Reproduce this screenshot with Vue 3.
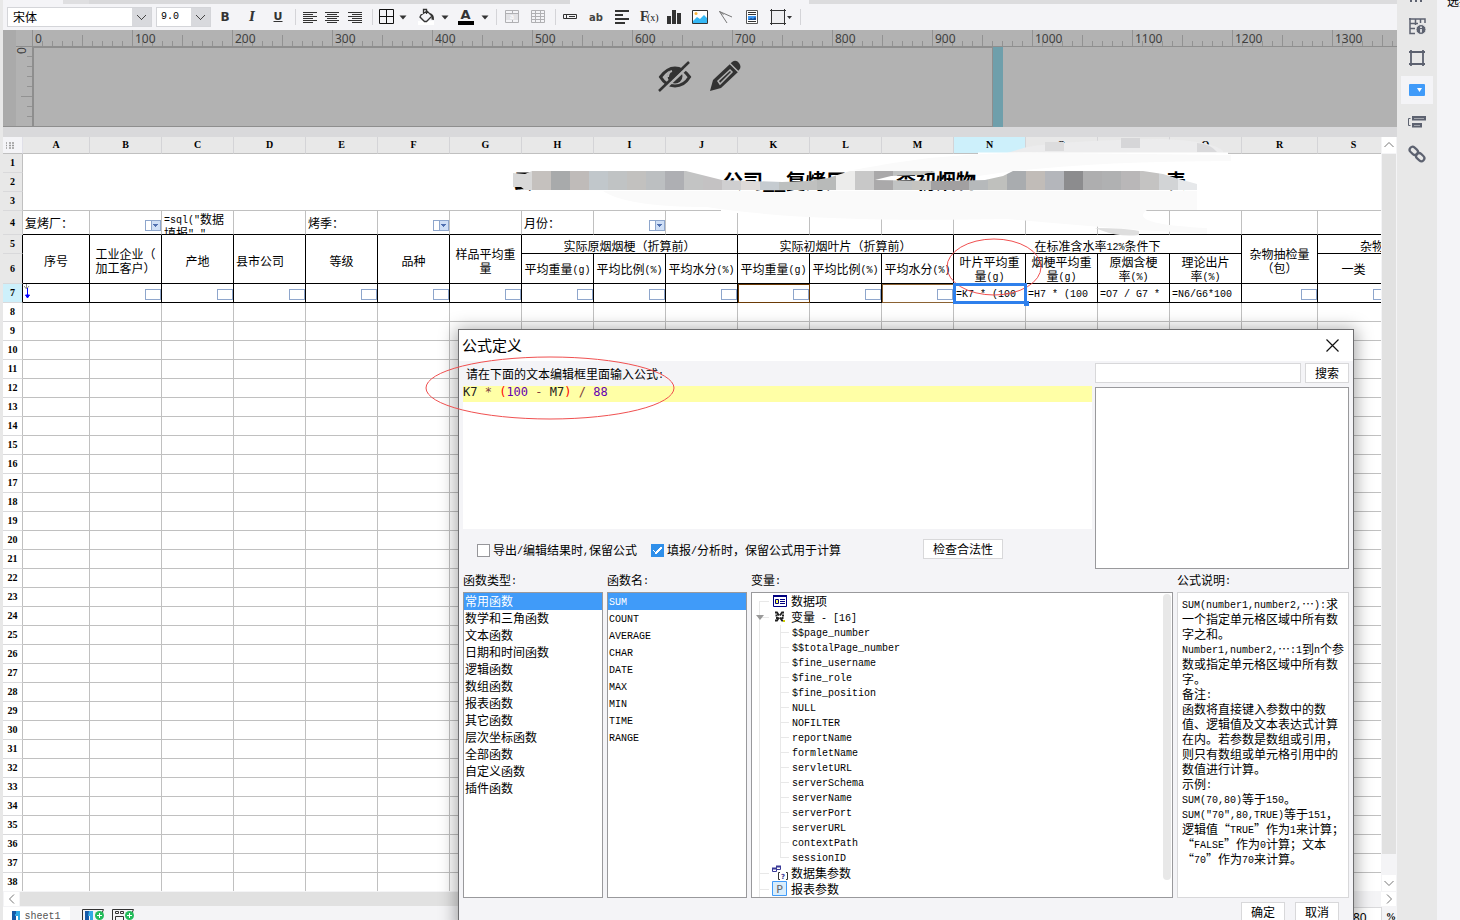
<script setup>
import { h, ref } from 'vue'

// Splits mixed text so that Latin runs take the half-width face.
const Mix = (props) =>
  h(
    'span',
    { class: 'mix' },
    props.t.split(/([\x20-\x7e]+)/).filter(Boolean).map((run) =>
      /^[\x20-\x7e]+$/.test(run) ? h('span', { class: 'lat' }, run) : run
    )
  )
Mix.props = ['t']

const K = '#333'
const bars = (rows) => rows.map(([x, y, w]) => `<path d="M${x} ${y}h${w}" stroke="${K}"/>`).join('')
const caret = '<path d="M8.500 9.500h7l-3.500 4z" fill="#333"/>'

const tools = [
  { n: '加粗', w: 28, s: `<text x="12" y="15" text-anchor="middle" font-family="DejaVu Sans" font-weight="bold" font-size="12" fill="${K}">B</text>` },
  { n: '倾斜', w: 26, s: `<text x="12" y="15" text-anchor="middle" font-family="DejaVu Serif" font-weight="bold" font-style="italic" font-size="12" fill="${K}">I</text>` },
  { n: '下划线', w: 26, s: `<text x="12" y="14" text-anchor="middle" font-family="DejaVu Sans" font-weight="bold" font-size="11" fill="${K}">U</text><path d="M7.500 15.500h9" stroke="${K}"/>` },
  { sep: 1, w: 8 },
  { n: '左对齐', w: 22, s: bars([[5, 6.5, 14], [5, 8.5, 10], [5, 10.5, 14], [5, 12.5, 10], [5, 14.5, 14], [5, 16.5, 10]]) },
  { n: '居中', w: 22, s: bars([[5, 6.5, 14], [7, 8.5, 10], [5, 10.5, 14], [7, 12.5, 10], [5, 14.5, 14], [7, 16.5, 10]]) },
  { n: '右对齐', w: 24, s: bars([[5, 6.5, 14], [9, 8.5, 10], [5, 10.5, 14], [9, 12.5, 10], [5, 14.5, 14], [9, 16.5, 10]]) },
  { sep: 1, w: 10 },
  { n: '边框', w: 18, s: '<path d="M5.500 3.500h14v14h-14zM12.500 3.500v14M5.500 10.500h14" fill="none" stroke="#111"/>' },
  { n: '边框选项', w: 16, s: caret },
  { n: '填充', w: 30, s: '<rect x="4" y="15" width="16" height="4" fill="#fff"/><path d="M7 9l6-4 5 5-5.500 5.500h-2L6 11zM9.500 8V3.500h3V8" fill="none" stroke="#333" stroke-width="1.300"/><path d="M15.500 7q5 1 4.500 7l-2.500-.5V10z" fill="#333"/>' },
  { n: '填充选项', w: 8, s: caret },
  { n: '字体颜色', w: 32, s: `<text x="12.500" y="13" text-anchor="middle" font-family="DejaVu Sans" font-weight="bold" font-size="13" fill="${K}">A</text><rect x="5" y="15" width="16" height="4"/>` },
  { n: '字体颜色选项', w: 8, s: caret },
  { sep: 1, w: 14 },
  { n: '合并单元格', w: 18, s: '<path d="M5.500 4.500h13v12h-13zM5 7.500h14M12.500 4v3M12.500 14v3" fill="none" stroke="#b0b0b3"/><rect x="6" y="8" width="12" height="6" fill="#e2e2e5"/><text x="12" y="13" text-anchor="middle" font-family="DejaVu Sans" font-size="7" fill="#fff">a</text>' },
  { n: '取消合并', w: 32, s: '<path d="M6.500 4.500h13v12h-13zM6 7.500h14M6 10.500h14M6 13.500h14M10.500 4v13M15.500 4v13" fill="none" stroke="#b0b0b3"/>' },
  { sep: 1, w: 4 },
  { n: '控件', w: 26, s: '<path d="M5.500 8.500h13v4h-13z" fill="none" stroke="#333"/><path d="M8.500 8v5M11 10.500h6" stroke="#333"/>' },
  { n: '文本', w: 26, s: `<text x="12" y="15" text-anchor="middle" font-family="DejaVu Sans" font-weight="bold" font-size="10" fill="#444">ab</text>` },
  { n: '富文本', w: 26, s: '<path d="M5 5h14M5 9h8M5 13h14M5 17h10" stroke="#333" stroke-width="2"/>' },
  { n: '公式', w: 26, s: '<text x="4" y="15" font-family="Liberation Serif" font-weight="bold" font-size="14" fill="#333">F</text><text x="11" y="15" font-family="Liberation Serif" font-size="10" fill="#111">(x)</text>' },
  { n: '图表', w: 26, s: '<path d="M5 10h4v8H5zM10 4h4v14h-4zM15 7h4v11h-4z" fill="#333"/>' },
  { n: '图片', w: 26, s: '<path d="M4.500 4.500h15v13h-15z" fill="#fff" stroke="#333"/><circle cx="8" cy="7.500" r="1.500" fill="#fcb53c"/><path d="M5 15l4-4 3 2 4-4 3 3v5H5z" fill="#35b8f5"/>' },
  { n: '斜线', w: 26, s: '<path d="M5.500 5.500L18 11M5.500 5.500L13 17M5.500 5.500l4 3" fill="none" stroke="#777"/>' },
  { n: '子报表', w: 26, s: '<path d="M6.500 4.500h11v13h-11z" fill="#fff" stroke="#555"/><path d="M8 6.500h8M8 8.500h8M8 15.500h8" stroke="#333"/><rect x="8" y="10" width="8" height="4" fill="#3c97f3"/><path d="M8 14l3-2 2 1 2-2 1 1v2z" fill="#174f94"/>' },
  { n: '悬浮元素', w: 32, s: '<path d="M2.500 4.500h13v13h-13z" fill="#efeff1" stroke="#333"/><path d="M1 4.500h16M1 17.500h16M2.500 3v16M15.500 3v16" stroke="#333"/><path d="M18 10h5l-2.500 3z" fill="#333"/>' },
  { sep: 1, w: 6 }
]

const sideTools = [
  { n: '单元格属性', s: '<path d="M4 5h16v4M5 4v15.500h5M5 9.500h8M5 14.500h5M10.500 5v6M15.500 5v4" fill="none" stroke="#5d6270" stroke-width="1.500"/><circle cx="16" cy="15.500" r="5" fill="#5d6270" stroke="#e8e8e8"/><path d="M16 12.500v1.500M16 15v3.500" stroke="#fff" stroke-width="1.500"/>' },
  { n: '单元格元素', s: '<path d="M6 6h12v12H6zM4 6h16M4 18h16M6 4v16M18 4v16" fill="none" stroke="#5d6270" stroke-width="1.800"/>' },
  { n: '控件设置', on: true, s: '<rect x="4" y="6" width="16" height="12" rx="1" fill="#409bf9"/><path d="M12 10h5l-2.500 4z" fill="#fff"/>' },
  { n: '条件属性', s: '<path d="M8 7h12v2.500H8zM8 14h8v2.500H8z" fill="none" stroke="#5d6270" stroke-width="2"/><path d="M5.500 8.500h-2v7h2" fill="none" stroke="#5d6270"/>' },
  { n: '超级链接', s: '<g fill="none" stroke="#5d6270" stroke-width="2.200"><rect x="-5.500" y="-3" width="9" height="6" rx="3" transform="translate(9.500 9.500) rotate(42)"/><rect x="-3.500" y="-3" width="9" height="6" rx="3" transform="translate(14.500 14.500) rotate(42)"/></g>' }
]

const letters = 'ABCDEFGHIJKLMNOPQRS'.split('')
const rest = Array.from({ length: 31 }, (_, i) => i + 8)
const labels = Array.from({ length: 14 }, (_, i) => i * 100)
const ticks = Array.from({ length: 137 }, (_, i) => i * 10)
const row4 = ['复烤厂：', '@', '=', '', '烤季：', '@', '', '月份：', '@', '', '', '', '', '', '', '', '', '', '']
// Row 7 cells by column; every other column holds an input widget.
const row7 = { A: 'A', K: '#k', M: '#m', N: '=K7 * (100', O: '=H7 * (100', P: '=O7 / G7 *', Q: '=N6/G6*100' }
const cell7 = (l) => row7[l] || '#'

const mosaic = ['d8d8d8', 'c5c1be', 'a8aaab', 'bfbbb9', 'c1c7cb', 'c0c3c4', 'c2c1bf', 'bcbfc1', 'aeafb3', 'c3c4c4', 'c4c2c3', 'cfcfd0', 'dedad8', 'c5cbd0', 'bdc0bf', 'bfc0bf', 'b8bab9', 'ececeb', 'c8c8c8', 'aaa9aa', 'c1c3c3', 'c5c4c0', 'a2a1a2', 'a2a0a1', 'b6b9bb', 'bfc0bd', 'a9acaf', 'c1bcb8', 'b4b6bb', '8c8c8e', 'aeaeaf', 'b0b1b2', 'b9b7b8', 'c4c3c2', 'd2d4d6', 'e6e8ea']

const types = ['常用函数', '数学和三角函数', '文本函数', '日期和时间函数', '逻辑函数', '数组函数', '报表函数', '其它函数', '层次坐标函数', '全部函数', '自定义函数', '插件函数']
const names = ['SUM', 'COUNT', 'AVERAGE', 'CHAR', 'DATE', 'MAX', 'MIN', 'TIME', 'RANGE']
const vars = ['$$page_number', '$$totalPage_number', '$fine_username', '$fine_role', '$fine_position', 'NULL', 'NOFILTER', 'reportName', 'formletName', 'servletURL', 'serverSchema', 'serverName', 'serverPort', 'serverURL', 'contextPath', 'sessionID']
const help = ['SUM(number1,number2,⋯):求', '一个指定单元格区域中所有数', '字之和。', 'Number1,number2,⋯:1到n个参', '数或指定单元格区域中所有数', '字。', '备注:', '函数将直接键入参数中的数', '值、逻辑值及文本表达式计算', '在内。若参数是数组或引用，', '则只有数组或单元格引用中的', '数值进行计算。', '示例:', 'SUM(70,80)等于150。', 'SUM("70",80,TRUE)等于151，', '逻辑值“TRUE”作为1来计算；', '“FALSE”作为0计算；文本', '“70”作为70来计算。']

const typeSel = ref(0)
const nameSel = ref(0)
const keepExport = ref(false)
const keepCalc = ref(true)
</script>

<template>
  <div class="app" lang="zh-CN">
    <main class="main">
      <div class="tabstrip"><i class="t1"></i><i class="t2"></i><i class="t3"></i><i class="t4"></i><i class="t5"></i></div>
      <div class="toolbar">
        <select class="combo font" aria-label="字体"><option>宋体</option></select>
        <select class="combo size" aria-label="字号"><option>9.0</option></select>
        <template v-for="(t, i) in tools" :key="i">
          <span v-if="t.sep" class="sep" :style="{ width: t.w + 'px' }"></span>
          <button v-else class="tb" :style="{ width: t.w + 'px' }" :aria-label="t.n"><svg width="24" height="22" viewBox="0 0 24 22" v-html="t.s"></svg></button>
        </template>
      </div>

      <div class="ruler">
        <svg width="100%" height="97">
          <rect width="13" height="97" fill="#aaaaaa" />
          <path d="M13 16.500H1394M29.500 0V97M30 17.500H989.500M30.500 16V96M989.500 17V96M0 96.500H990" stroke="#8e8e8e" fill="none" />
          <rect x="990" y="17" width="10" height="80" fill="#6f9fab" />
          <path v-for="x in ticks" :key="x" :d="`M${x + 29.5} ${x % 100 === 0 ? 0 : x % 50 === 0 ? 5 : 11}V16`" stroke="#929292" />
          <path v-for="y in [10, 20, 30, 40, 50, 60, 70]" :key="'v' + y" :d="`M${y === 50 ? 18 : 24} ${y + 16.5}H29`" stroke="#929292" />
          <text v-for="x in labels" :key="'l' + x" :x="x + 32" y="13" class="rl">{{ x }}</text>
          <text class="rl" transform="translate(23 17) rotate(-90)" text-anchor="end">0</text>
          <g transform="translate(656 31)" fill="none" stroke="#333">
            <path d="M1.500 16Q8 7 16 7t14.500 9Q25 25 16 25T1.500 16z" stroke-width="3" />
            <circle cx="16" cy="15" r="7.500" fill="#333" stroke="none" />
            <path d="M9 16q0-5 4-6" stroke="#b2b2b2" stroke-width="2" />
            <path d="M2 31L33 2" stroke="#b2b2b2" stroke-width="3" />
            <path d="M0 30L30 1" stroke-width="2.500" />
          </g>
          <g transform="translate(707 31)">
            <path d="M0 30l3-11L20 3l8 8L11 27z" fill="#333" />
            <path d="M22 1q4-3 7 1t0 7l-1 1-8-7z" fill="#333" />
            <path d="M20 2.500l8 8" stroke="#b2b2b2" stroke-width="1.500" />
            <path d="M8 20L20 9l2 2L10 23z" fill="none" stroke="#b2b2b2" stroke-width="1.500" />
          </g>
        </svg>
      </div>

      <div class="sheetwrap">
        <div class="sheet">
          <table>
            <colgroup><col class="ch" /><col class="ca" /><col v-for="n in 16" :key="n" class="cn" /><col class="cr" /><col class="cn" /></colgroup>
            <thead>
              <tr class="head">
                <th class="corner"><svg width="9" height="7" viewBox="0 0 9 7"><path d="M0 1h1M0 3.500h1M0 6h1M3 1h2M6 1h2M3 3.500h2M6 3.500h2M3 6h2M6 6h2" stroke="#999" stroke-width="1.500" /></svg></th>
                <th v-for="l in letters" :key="l" :class="{ cur: l === 'N' }">{{ l }}</th>
              </tr>
            </thead>
            <tbody>
              <tr class="r19"><th class="g">1</th><td colspan="19" rowspan="3"></td></tr>
              <tr class="r19"><th class="g">2</th></tr>
              <tr class="r19"><th class="g">3</th></tr>
              <tr class="r24 above">
                <th class="g">4</th>
                <td v-for="(c, i) in row4" :key="i" :class="{ wd: c === '@' }">
                  <select v-if="c === '@'" class="cellselect" aria-label="筛选"></select>
                  <div v-else-if="c === '='" class="clip"><Mix t='=sql("数据' /><br /><Mix t='填报","' /></div>
                  <Mix v-else :t="c" />
                </td>
              </tr>
              <tr class="r19 blk five">
                <th class="g">5</th>
                <td rowspan="2" class="c">序号</td>
                <td rowspan="2" class="c">工业企业（<br />加工客户）</td>
                <td rowspan="2" class="c">产地</td>
                <td rowspan="2">县市公司</td>
                <td rowspan="2" class="c">等级</td>
                <td rowspan="2" class="c">品种</td>
                <td rowspan="2" class="c">样品平均重<br />量</td>
                <td colspan="3" class="c">实际原烟烟梗（折算前）</td>
                <td colspan="3" class="c">实际初烟叶片（折算前）</td>
                <td colspan="4" class="c"><Mix t="在标准含水率12%条件下" /></td>
                <td rowspan="2" class="c">杂物抽检量<br />（包）</td>
                <td class="far">杂物</td>
              </tr>
              <tr class="r30 blk six">
                <th class="g">6</th>
                <template v-for="k in 2" :key="k">
                  <td class="c"><Mix t="平均重量(g)" /></td>
                  <td class="c"><Mix t="平均比例(%)" /></td>
                  <td class="c"><Mix t="平均水分(%)" /></td>
                </template>
                <td class="c">叶片平均重<br /><Mix t="量(g)" /></td>
                <td class="c">烟梗平均重<br /><Mix t="量(g)" /></td>
                <td class="c">原烟含梗<br /><Mix t="率(%)" /></td>
                <td class="c">理论出片<br /><Mix t="率(%)" /></td>
                <td class="c">一类</td>
              </tr>
              <tr class="r19 blk">
                <th class="cur">7</th>
                <td v-for="l in letters" :key="l" :class="{ wd: cell7(l)[0] === '#', refk: l === 'K', refm: l === 'M', sel: l === 'N', mark: l === 'A' }">
                  <input v-if="cell7(l)[0] === '#'" class="cellinput" :aria-label="l + '7'" />
                  <svg v-else-if="l === 'A'" width="8" height="16" viewBox="0 0 8 16"><path d="M2.500 0v4M0 2l2.500 3L5 2" fill="none" stroke="#888" /><path d="M3.500 4v9M1.500 11l2 3 2-3z" stroke="#00f" fill="#00f" /></svg>
                  <Mix v-else :t="cell7(l)" />
                </td>
              </tr>
              <tr v-for="r in rest" :key="r" class="r19"><th>{{ r }}</th><td v-for="l in letters" :key="l"></td></tr>
            </tbody>
          </table>
          <svg class="smudge" width="1378" height="110">
            <path d="M1024 10Q1070 3 1160 2q50 2 60 12v6H990z" fill="#ececed" />
            <rect x="1042" y="5" width="19" height="9" fill="#dcdcdd" /><rect x="1118" y="1" width="19" height="10" fill="#d6d6d8" />
            <path d="M1194 6q14 1 20 9h-20z" fill="#d9d9db" />
            <path d="M975 15.500h250v8H975zM718 72h380v4H718z" fill="#fff" />
            <path d="M600 54h594v19h-50q-20 14 60 18v6q-80-4-200-15-200 4-300-12-80 0-104-16zM850 33q100-20 200-17l178 2v6q-180 0-280 20z" fill="#fafafa" />
            <g class="title">
              <text x="510" y="52">云</text><text x="720" y="52">公司__复烤厂</text><text x="893" y="52">查初烟物</text><text x="1163" y="52">表</text>
            </g>
            <clipPath id="brush"><path d="M510 36L522 37 529 34H683L699 38 719 43 749 44 779 45 805 44 825 41 847 34H932L918 38 888 39 872 43 942 44 982 43 1000 39 1010 34H1140L1160 37 1176 42 1194 47V53H522L518 50H510z" /></clipPath>
            <g clip-path="url(#brush)"><rect v-for="(c, i) in mosaic" :key="i" :x="510 + i * 19" y="34" width="19" height="19" :fill="'#' + c" /></g>
            <path d="M1092 91q30 0 44 3v4q-20 2-36-4z" fill="#dedede" />
          </svg>
        </div>
        <div class="vbar">
          <button aria-label="向上滚动"><svg width="12" height="8" viewBox="0 0 12 8"><path d="M1.500 6L6 1.500 10.500 6" fill="none" stroke="#777" /></svg></button>
          <div class="vthumb"></div><div class="vspace"></div>
          <button aria-label="向下滚动"><svg width="12" height="8" viewBox="0 0 12 8"><path d="M1.500 2L6 6.500 10.500 2" fill="none" stroke="#777" /></svg></button>
        </div>
      </div>

      <div class="hbar">
        <button aria-label="向左滚动"><svg width="8" height="12" viewBox="0 0 8 12"><path d="M6 1.500L1.500 6 6 10.500" fill="none" stroke="#777" /></svg></button>
        <div class="hthumb"></div><div class="hspace"></div>
        <button aria-label="向右滚动"><svg width="8" height="12" viewBox="0 0 8 12"><path d="M2 1.500L6.500 6 2 10.500" fill="none" stroke="#777" /></svg></button>
      </div>

      <div class="sheets">
        <button class="stab"><svg width="8" height="12" viewBox="0 0 8 12"><path d="M0 1h4v11H0z" fill="#1459a8" /><path d="M4 1h4v11H6V6H3V4h1z" fill="#32a9e4" /></svg><span>sheet1</span></button>
        <button class="add" aria-label="新增报表"><svg width="22" height="16" viewBox="0 0 22 16"><path d="M.5 15V.5h21L20 4" fill="none" stroke="#333" /><path d="M3 2h4v12H3z" fill="#1459a8" /><path d="M7 2h4v12H8V7H6z" fill="#32a9e4" /><circle cx="17.500" cy="6.500" r="4.500" fill="#23bb5a" /><path d="M15 6.500h5M17.500 4v5" stroke="#fff" /></svg></button>
        <button class="add" aria-label="新增聚合报表"><svg width="22" height="16" viewBox="0 0 22 16"><path d="M.5 15V.5h21L20 4M3.500 2.500h3v2h-3zM8.500 2.500h3v2h-3zM3.500 7.500h8v5h-8z" fill="none" stroke="#333" /><circle cx="17.500" cy="6.500" r="4.500" fill="#23bb5a" /><path d="M15 6.500h5M17.500 4v5" stroke="#fff" /></svg></button>
        <span class="grow"></span>
        <input class="zoom" aria-label="缩放比例" value="80" /><span class="pct">%</span>
      </div>
    </main>

    <aside class="side">
      <button class="cut" aria-label="更多"><svg width="24" height="8" viewBox="0 0 24 8"><path d="M5 0h2M10 0h2M15 0h2" stroke="#5d6270" stroke-width="4" /></svg></button>
      <button v-for="s in sideTools" :key="s.n" :class="{ on: s.on }" :aria-label="s.n"><svg width="24" height="24" viewBox="0 0 24 24" v-html="s.s"></svg></button>
    </aside>
    <aside class="props"><span>选择</span></aside>

    <section class="dialog" role="dialog" aria-labelledby="dlg-title">
      <header><h2 id="dlg-title">公式定义</h2><button aria-label="关闭"><svg width="13" height="13" viewBox="0 0 13 13"><path d="M.5.5l12 12M12.500.5l-12 12" stroke="#111" stroke-width="1.200" /></svg></button></header>
      <div class="upper">
        <div class="left">
          <label id="ed-label" class="edlabel"><Mix t="请在下面的文本编辑框里面输入公式:" /></label>
          <div class="editor" role="textbox" aria-labelledby="ed-label" contenteditable="true" spellcheck="false"><div class="line">K7 <i>*</i> <b>(</b><u>100</u> <i>-</i> M7<b>)</b> <i>/</i> <u>88</u></div></div>
          <div class="opts">
            <label><input v-model="keepExport" type="checkbox" /><Mix t="导出/编辑结果时,保留公式" /></label>
            <label><input v-model="keepCalc" type="checkbox" /><Mix t="填报/分析时，保留公式用于计算" /></label>
            <button class="btn check">检查合法性</button>
          </div>
        </div>
        <div class="right">
          <div class="search"><input type="text" aria-label="搜索函数" /><button class="btn">搜索</button></div>
          <div class="results"></div>
        </div>
      </div>
      <div class="lower">
        <div><h3><Mix t="函数类型:" /></h3><ul class="box"><li v-for="(t, i) in types" :key="t" :class="{ on: i === typeSel }" @click="typeSel = i">{{ t }}</li></ul></div>
        <div><h3><Mix t="函数名:" /></h3><ul class="box"><li v-for="(t, i) in names" :key="t" :class="{ on: i === nameSel }" @click="nameSel = i"><Mix :t="t" /></li></ul></div>
        <div>
          <h3><Mix t="变量:" /></h3>
          <div class="box tree">
            <ul class="top">
              <li><svg class="ico" width="14" height="12" viewBox="0 0 14 12"><path d="M.5.500h13v11H.5z" fill="#fff" stroke="#000080" /><path d="M0 1h14" stroke="#000080" stroke-width="2" /><path d="M2.500 4.500h3v4h-3z" fill="#ff5" stroke="#000080" /><path d="M7 4.500h5M7 6.500h5M7 8.500h5" stroke="#000080" /></svg>数据项</li>
              <li class="open"><svg class="ico" width="14" height="12" viewBox="0 0 14 12"><path d="M2 1.500h2l2 3M11 1.500H9l-2 3M2 9.500h2l2-3M10 9.500H9l-2-3M2.500 4.500h2M9 4.500h2M3 7h2M8.500 7h2" fill="none" stroke="#222" stroke-width="1.800" /><path d="M10 10h2" stroke="#cc0" stroke-width="2" /></svg><Mix t="变量 - [16]" />
                <ul class="kids"><li v-for="v in vars" :key="v"><Mix :t="v" /></li></ul>
              </li>
              <li><svg class="ico" width="16" height="16" viewBox="0 0 16 16"><path d="M4.500 1.500h4v3h-4zM.5 3.500h4v3h-4z" fill="#fff" stroke="#3a3a98" /><path d="M4 1.500h5M0 3.500h5" stroke="#3a3a98" stroke-width="2" /><path d="M8 7.500H6.500v7H8M14 7.500h1.500v7H14" fill="none" stroke="#333" /><text x="11" y="14" text-anchor="middle" font-family="DejaVu Sans" font-weight="bold" font-size="7" fill="#3a3a98">?</text></svg>数据集参数</li>
              <li><svg class="ico" width="15" height="15" viewBox="0 0 15 15"><path d="M.5.500h14v14H.5z" fill="#d9edfb" stroke="#409bf9" /><text x="7.500" y="11.500" text-anchor="middle" font-family="DejaVu Sans" font-size="11" fill="#666">P</text></svg>报表参数</li>
            </ul>
            <div class="thumb"></div>
          </div>
        </div>
        <div><h3><Mix t="公式说明:" /></h3><div class="box help"><p v-for="l in help" :key="l"><Mix :t="l" /></p></div></div>
      </div>
      <footer><button class="btn">确定</button><button class="btn">取消</button></footer>
    </section>

    <svg class="marks" width="1397" height="920">
      <ellipse cx="994" cy="267" rx="47" ry="28" /><ellipse cx="550" cy="388" rx="124" ry="31" />
    </svg>
  </div>
</template>

<style>
body { margin: 0; overflow: hidden; }
.mix { white-space: pre; }
.lat { font-family: "Liberation Mono", monospace; font-size: 10px; line-height: 0; vertical-align: 1px; }
</style>

<style scoped>
.app { position: relative; display: flex; height: 100vh; overflow: hidden; background: #e8e8e8; font: 12px/14px "Noto Sans CJK SC", sans-serif; color: #000; padding-left: 3px; box-sizing: border-box; }
.app * { box-sizing: border-box; }
button { border: 0; padding: 0; margin: 0; background: none; font: inherit; color: inherit; display: flex; align-items: center; justify-content: center; }
svg { display: block; flex: none; }
ul, h2, h3, p { margin: 0; padding: 0; list-style: none; font-weight: normal; }
.main { flex: 1; min-width: 0; display: flex; flex-direction: column; background: #d9d9db; }
.tabstrip { height: 4px; display: flex; flex: none; }
.tabstrip i { background: #f4f4f7; }
.tabstrip .t1 { width: 60px; }
.tabstrip .t2 { width: 26px; background: #dfdfe1; }
.tabstrip .t3 { width: 481px; background: #d9d9db; }
.tabstrip .t4 { width: 239px; }
.tabstrip .t5 { flex: 1; background: #dcdcde; }
.toolbar { height: 26px; flex: none; display: flex; align-items: center; background: #f4f4f7; padding-left: 4px; }
.combo { appearance: none; height: 20px; border: 1px solid #d4d5d9; border-radius: 0; padding: 0 0 0 4px; font: 12px/18px "Noto Sans CJK SC", sans-serif; color: #000; background: linear-gradient(-45deg, transparent 42%, #444 42% 58%, transparent 58%) right 5px top 7px / 5px 5px no-repeat, linear-gradient(45deg, transparent 42%, #444 42% 58%, transparent 58%) right 9px top 7px / 5px 5px no-repeat, linear-gradient(#d8d9dd, #d8d9dd) right / 19px 100% no-repeat, #fff; }
.font { width: 145px; padding-left: 5px; }
.size { width: 55px; margin-left: 4px; font: 10px/18px "Liberation Mono", monospace; }
.tb { height: 22px; flex: none; }
.sep { flex: none; height: 16px; background: linear-gradient(#d4d4d8, #d4d4d8) center / 1px 100% no-repeat; }
.ruler { height: 97px; flex: none; background: #b2b2b2; overflow: hidden; margin-bottom: 10px; }
.rl { font: 12px "Noto Sans", sans-serif; fill: #404040; }

.sheetwrap { flex: 1; min-height: 0; display: flex; }
.sheet { flex: 1; min-width: 0; overflow: hidden; position: relative; background: #fff; }
table { table-layout: fixed; width: 1387px; border-collapse: separate; border-spacing: 0; }
.ch { width: 20px; }
.ca { width: 67px; }
.cn { width: 72px; }
.cr { width: 76px; }
th { padding: 0; font: bold 10px/12px "Liberation Serif", serif; border-right: 1px solid #c0c0c0; border-bottom: 1px solid #d9d9db; background: #fff; }
td { padding: 0 0 0 2px; border-right: 1px solid #c0c0c0; border-bottom: 1px solid #c0c0c0; line-height: 14px; white-space: nowrap; }
.head { height: 17px; }
.head th { background: #e8e8e8; border-right-color: #d4d4d7; border-bottom-color: #c0c0c0; }
.head .corner { background: #f4f4f7; border-right-color: #e0e0e8; }
.corner svg { margin-left: 3px; }
th.g { background: #e8e8e8; }
.head .cur, th.cur { background: #cdf0fb; }
.r19 { height: 19px; }
.r24 { height: 24px; }
.r30 { height: 30px; }
.above td { border-bottom-color: #000; }
.blk td { border-color: #000; }
.blk th { border-right-color: #000; }
.c { text-align: center; padding: 0; }
.five td { padding-top: 3px; }
.six td { padding-top: 1px; }
.far { padding-left: 42px; }
.clip { height: 23px; overflow: hidden; padding-top: 1px; }
.wd { text-align: right; vertical-align: bottom; line-height: 0; padding: 0; }
.mark { vertical-align: top; padding-left: 1px; }
.cellinput { width: 16px; height: 11px; border: 1px solid #8ea6cc; border-radius: 0; padding: 0; display: block; margin: 0 0 2px auto; background: #fff; }
.cellselect { appearance: none; width: 16px; height: 11px; display: block; margin: 0 0 3px auto; border: 1px solid #8ea6cc; border-radius: 0; background: linear-gradient(#5070b0, #5070b0) right 2px top 3px / 5px 1px no-repeat, linear-gradient(#5070b0, #5070b0) right 3px top 4px / 3px 1px no-repeat, linear-gradient(#5070b0, #5070b0) right 4px top 5px / 1px 1px no-repeat, linear-gradient(90deg, #8ea6cc 1px, #cfdff6 1px) right / 9px 100% no-repeat, #fff; }
.refk, .refm, .sel { position: relative; }
.refk::after, .refm::after { content: ""; position: absolute; inset: 0 -1px -1px 0; border: 1px solid #6b3a06; pointer-events: none; z-index: 1; }
.refm::after { border-color: #8b6233; }
.sel::before { content: ""; position: absolute; inset: -1px -2px -2px -1px; border: 3px solid #2f80ec; z-index: 2; pointer-events: none; }
.sel::after { content: ""; position: absolute; right: -4px; bottom: -4px; width: 5px; height: 5px; background: #2f80ec; z-index: 2; }
.smudge { position: absolute; left: 0; top: 0; }
.title { font: bold 20px "Noto Sans CJK SC", serif; }

.vbar { width: 16px; flex: none; display: flex; flex-direction: column; background: #f4f4f6; padding: 0 1px; }
.vbar button { height: 16px; background: #fff; flex: none; }
.vthumb { flex: 1; margin-top: 1px; background: #e1e1e1; }
.vspace { height: 21px; }
.hbar { height: 16px; flex: none; display: flex; background: #f4f4f6; padding: 1px; }
.hbar button { width: 15px; background: #fff; }
.hthumb { flex: 1; margin-left: 1px; background: #e1e1e1; }
.hspace { width: 80px; }
.sheets { height: 13px; flex: none; overflow: hidden; display: flex; align-items: flex-start; background: #f4f4f6; }
.stab { width: 67px; height: 20px; background: #fff; gap: 4px; font: 10px/20px "Liberation Mono", monospace; color: #555; margin-right: 12px; align-items: flex-start; padding-top: 3px; }
.stab span { line-height: 14px; }
.add { height: 20px; margin-right: 8px; }
.grow { flex: 1; }
.zoom { width: 42px; height: 20px; border: 1px solid #d9d9db; border-radius: 0; padding: 0 0 0 12px; font: 12px "Noto Sans", sans-serif; background: #fff; }
.pct { width: 15px; font: bold 10px/20px "Liberation Serif", serif; padding-left: 4px; }

.side { width: 40px; flex: none; display: flex; flex-direction: column; gap: 4px; align-items: center; }
.side button { width: 32px; height: 28px; flex: none; }
.side .cut { height: 8px; }
.side .on { background: #f4f4f7; }
.props { width: 23px; flex: none; background: #f4f4f7; overflow: hidden; padding-left: 10px; white-space: nowrap; }
.props span { display: block; margin-top: -6px; }

.dialog { position: absolute; left: 458px; top: 329px; width: 896px; background: #f4f4f7; border: 1px solid #6e6e70; box-shadow: 0 2px 16px 2px rgba(0, 0, 0, .35); }
.dialog header { height: 31px; background: #fff; display: flex; align-items: center; justify-content: space-between; padding: 0 14px 0 3px; }
.dialog h2 { font-size: 15px; line-height: 18px; padding-bottom: 2px; }
.upper { display: grid; grid-template-columns: 1fr 254px; gap: 3px; padding: 0 4px; }
.edlabel { display: block; height: 25px; line-height: 25px; padding-left: 3px; }
.editor { height: 143px; background: #fff; outline: 0; font: 12px/16px "DejaVu Sans Mono", monospace; color: #222; }
.line { background: #ffffa6; line-height: 13px; height: 16px; white-space: pre; }
.line i { font-style: normal; color: #804040; }
.line b { font-weight: normal; color: #f00; }
.line u { text-decoration: none; color: #6400b4; }
.opts { height: 42px; display: flex; align-items: center; padding-left: 14px; }
.opts label { display: flex; align-items: center; gap: 3px; margin-right: 14px; }
.opts input { appearance: none; width: 13px; height: 13px; margin: 0; border: 1px solid #96969a; background: #fff; }
.opts input:checked { border-color: #2f8fea; background: linear-gradient(45deg, transparent 38%, #fff 38% 62%, transparent 62%) 1px 5px / 4px 4px no-repeat, linear-gradient(-45deg, transparent 42%, #fff 42% 58%, transparent 58%) 3px 2px / 7px 7px no-repeat, #2f8fea; }
.btn { height: 20px; background: #fff; border: 1px solid #d8d8da; }
.check { width: 80px; margin: 0 0 2px 68px; }
.right { padding-top: 2px; }
.search { display: flex; gap: 4px; }
.search input { flex: 1; min-width: 0; height: 20px; border: 1px solid #d8d8da; background: #fff; padding: 0 4px; }
.search .btn { width: 44px; }
.results { margin-top: 4px; height: 182px; background: #fff; border: 1px solid #99999c; }
.lower { display: grid; grid-template-columns: 140px 140px 1fr 172px; gap: 4px; padding: 0 4px; }
.lower h3 { font-size: 12px; line-height: 17px; height: 21px; }
.box { height: 306px; background: #fff; border: 1px solid #99999c; overflow: hidden; }
.box > li { height: 17px; line-height: 15px; padding-left: 1px; }
.box > li.on { background: #409bf9; color: #fff; }
.tree { position: relative; background: linear-gradient(#e8e8e8, #e8e8e8) 7px 8px / 1px 100% no-repeat, #fff; }
.top > li { min-height: 16px; line-height: 16px; padding-left: 39px; position: relative; background: linear-gradient(#e8e8e8, #e8e8e8) 7px 8px / 10px 1px no-repeat; }
.ico { position: absolute; left: 21px; top: 2px; }
.top > li:nth-child(n+3) .ico { top: 0; left: 20px; }
.open::before { content: ""; position: absolute; left: 4px; top: 6px; border: 4px solid transparent; border-top: 5px solid #999; border-bottom: 0; }
.kids { margin-left: -11px; background: linear-gradient(#e8e8e8, #e8e8e8) 0 0 / 1px 233px no-repeat; }
.kids li { height: 15px; line-height: 14px; padding-left: 12px; background: linear-gradient(#e8e8e8, #e8e8e8) 0 7px / 9px 1px no-repeat; }
.thumb { position: absolute; right: 1px; top: 1px; width: 8px; height: 286px; border-radius: 4px; background: #e8e8e8; }
.help { border-color: #d8d8da; padding: 4px 0 0 4px; }
.help p { line-height: 14px; height: 15px; white-space: nowrap; }
.dialog footer { display: flex; justify-content: flex-end; gap: 10px; padding: 4px 14px 6px; }
.dialog footer .btn { width: 44px; }
.marks { position: absolute; left: 0; top: 0; pointer-events: none; fill: none; stroke: #f05050; }
</style>
